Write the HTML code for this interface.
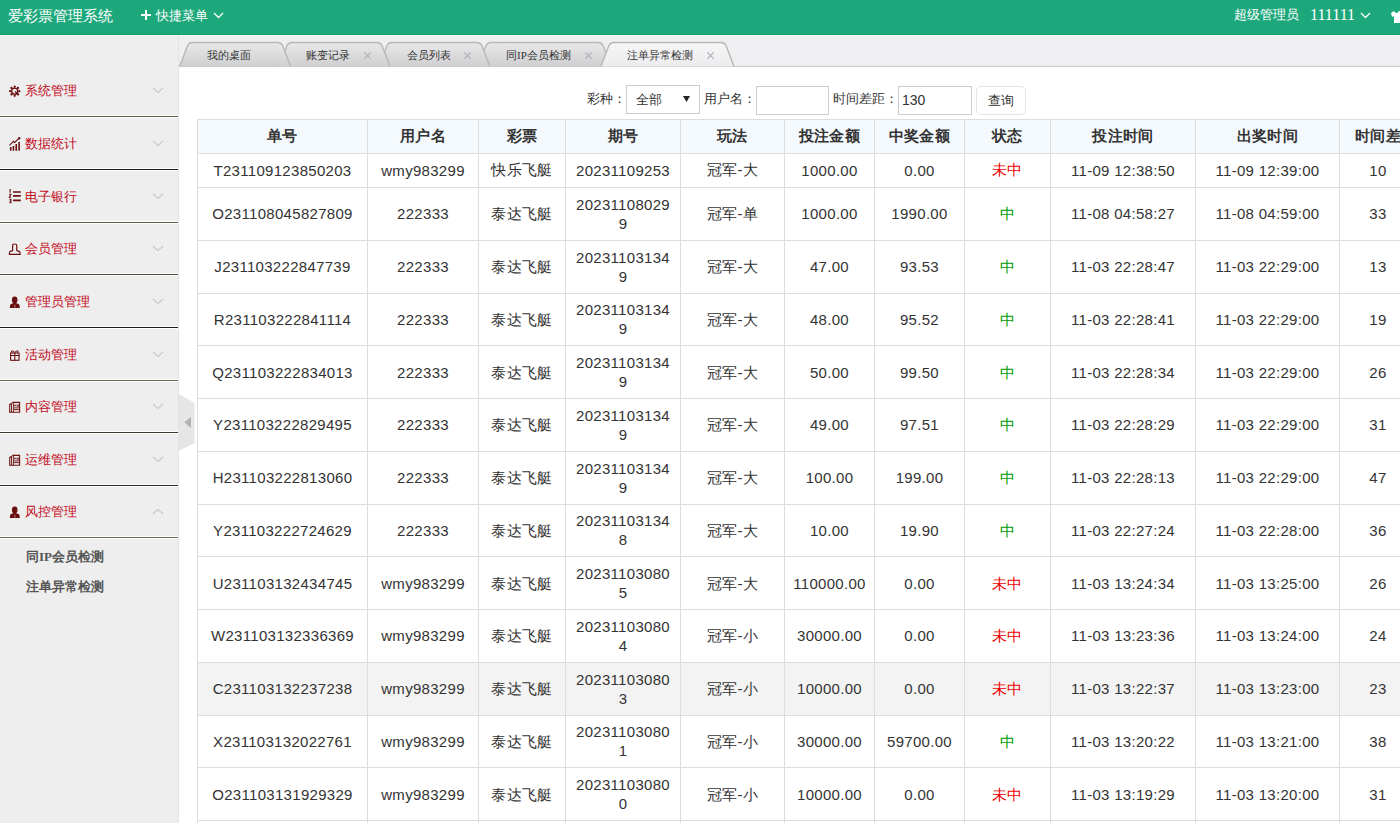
<!DOCTYPE html>
<html><head><meta charset="utf-8">
<style>
*{margin:0;padding:0;box-sizing:border-box}
html,body{width:1400px;height:823px;overflow:hidden;background:#fff;font-family:"Liberation Sans",sans-serif;color:#333}
.a{position:absolute;white-space:nowrap}
.hd{position:absolute;left:0;top:0;width:1400px;height:35px;background:#1da87b;border-bottom:1px solid #00a065;color:#fff}
.hl{position:absolute;left:0;top:35px;width:1400px;height:1px;background:#fbf3f6}
.side{position:absolute;left:0;top:36px;width:179px;height:787px;background:#eee;border-right:1px solid #e3e3e5}
.mt{font-size:13px;line-height:16px;color:#c20a1a}
.sep{position:absolute;left:0;width:178px;height:1px;background:#56564a;box-shadow:0 -1px 0 #fff,0 1px 0 #fff}
.sub{font-size:13px;line-height:16px;color:#555;font-weight:bold}
.tabbar{position:absolute;left:179px;top:36px;width:1221px;height:31px;background:#efeff1}
.tt{font-size:11px;line-height:16px;color:#333}
.cx{font-size:14px;line-height:16px;color:#a9b0b8}
.fl{font-size:13px;line-height:16px;color:#333}
.box{position:absolute;border:1px solid #ccc;background:#fff}
table{position:absolute;left:197px;top:119px;border-collapse:collapse;table-layout:fixed;font-size:15px}
td,th{letter-spacing:0.3px;border:1px solid #ddd;text-align:center;color:#333;font-weight:normal;padding:0;white-space:nowrap}
th{background:#f4f9fd;font-weight:bold;height:34px}
td{height:34px}
tr.w td{height:52.75px;line-height:19px}
tr.hov td{background:#f3f3f3}
.r{color:#e00}
.g{color:#090}
</style></head><body>
<div class="hd">
  <div class="a" style="left:8px;top:4.5px;font-size:15px;line-height:22px">爱彩票管理系统</div>
  <svg class="a" style="left:140px;top:9px" width="12" height="12"><path d="M6 1V11M1 6H11" stroke="#fff" stroke-width="2"/></svg>
  <div class="a" style="left:156px;top:5.5px;font-size:13px;line-height:20px">快捷菜单</div>
  <svg class="a" style="left:213px;top:12px" width="11" height="7"><path d="M1 1L5.5 5.5L10 1" stroke="#fff" stroke-width="1.3" fill="none"/></svg>
  <div class="a" style="left:1234px;top:5px;font-size:13px;line-height:20px">超级管理员</div>
  <div class="a" style="left:1310px;top:5px;font-family:'Liberation Serif',serif;font-size:16px;line-height:20px">111111</div>
  <svg class="a" style="left:1360px;top:12px" width="11" height="7"><path d="M1 1L5.5 5.5L10 1" stroke="#fff" stroke-width="1.3" fill="none"/></svg>
  <svg class="a" style="left:1391px;top:9px" width="11" height="14"><path d="M3 2L0 4L1 8L3 7V14H11V2H8Q7 4 5.5 4Q4 4 3 2Z" fill="#fff"/></svg>
</div>
<div class="hl"></div>
<div class="side">
<div class="a mt" style="left:25px;top:46.7px">系统管理</div>
<div class="sep" style="top:80.0px;background:#585c45"></div>
<svg class="a" style="left:152px;top:51.0px" width="12" height="7"><path d="M1 1L6 5.5L11 1" stroke="#c6c9cf" stroke-width="1.1" fill="none"/></svg>
<svg class="a" style="left:5px;top:43.5px" width="20" height="20"><circle cx="14.30" cy="11.20" r="1.15" fill="#6a0f0f"/><circle cx="12.95" cy="14.45" r="1.15" fill="#6a0f0f"/><circle cx="9.70" cy="15.80" r="1.15" fill="#6a0f0f"/><circle cx="6.45" cy="14.45" r="1.15" fill="#6a0f0f"/><circle cx="5.10" cy="11.20" r="1.15" fill="#6a0f0f"/><circle cx="6.45" cy="7.95" r="1.15" fill="#6a0f0f"/><circle cx="9.70" cy="6.60" r="1.15" fill="#6a0f0f"/><circle cx="12.95" cy="7.95" r="1.15" fill="#6a0f0f"/><circle cx="9.7" cy="11.2" r="3" fill="none" stroke="#6a0f0f" stroke-width="1.3"/><path d="M10 11.5L13.8 14.8" stroke="#6a0f0f" stroke-width="1.4"/></svg>
<div class="a mt" style="left:25px;top:99.7px">数据统计</div>
<div class="sep" style="top:133.0px;background:#1a1a14"></div>
<svg class="a" style="left:152px;top:104.0px" width="12" height="7"><path d="M1 1L6 5.5L11 1" stroke="#c6c9cf" stroke-width="1.1" fill="none"/></svg>
<svg class="a" style="left:5px;top:96.5px" width="20" height="20"><path d="M5.7 13.9V17.7M8.45 13V17.7M11.25 11V17.7M14.1 9V17.7" stroke="#6a0f0f" stroke-width="1.6"/><path d="M4.4 12.4L8.5 8.3L9.7 9.5L13.6 5.6" stroke="#6a0f0f" stroke-width="1.1" fill="none"/><circle cx="14.2" cy="5.2" r="1.2" fill="#6a0f0f"/></svg>
<div class="a mt" style="left:25px;top:152.7px">电子银行</div>
<div class="sep" style="top:186.0px;background:#585c45"></div>
<svg class="a" style="left:152px;top:157.0px" width="12" height="7"><path d="M1 1L6 5.5L11 1" stroke="#c6c9cf" stroke-width="1.1" fill="none"/></svg>
<svg class="a" style="left:5px;top:149.5px" width="20" height="20"><path d="M5.1 3V6.8M4.3 8.4H5.9L4.3 11.2H6M4.3 13.2H5.9V16.7H4.3M4.5 15H5.9" stroke="#6a0f0f" stroke-width="1.1" fill="none"/><path d="M8 6H15.8M8 9.85H15.8M8 14.45H15.8" stroke="#6a0f0f" stroke-width="1.7"/></svg>
<div class="a mt" style="left:25px;top:204.7px">会员管理</div>
<div class="sep" style="top:238.0px;background:#4a4d38"></div>
<svg class="a" style="left:152px;top:209.0px" width="12" height="7"><path d="M1 1L6 5.5L11 1" stroke="#c6c9cf" stroke-width="1.1" fill="none"/></svg>
<svg class="a" style="left:5px;top:201.5px" width="20" height="20"><path d="M7.6 12.5V7.5Q7.6 6 9.7 6Q11.8 6 11.8 7.5V12.5L14.6 13.6Q15.1 14 15.1 16.3H4.4Q4.4 14 4.9 13.6Z" fill="none" stroke="#6a0f0f" stroke-width="1.2"/></svg>
<div class="a mt" style="left:25px;top:257.7px">管理员管理</div>
<div class="sep" style="top:291.0px;background:#1a1a14"></div>
<svg class="a" style="left:152px;top:262.0px" width="12" height="7"><path d="M1 1L6 5.5L11 1" stroke="#c6c9cf" stroke-width="1.1" fill="none"/></svg>
<svg class="a" style="left:5px;top:254.5px" width="20" height="20"><ellipse cx="9.7" cy="8.9" rx="2.8" ry="3.4" fill="#6a0f0f"/><path d="M8.6 12H10.8L14 13.2Q14.8 13.8 14.8 17H4.8Q4.8 13.8 5.6 13.2Z" fill="#6a0f0f"/><path d="M9.9 13.8V16.6" stroke="#d9b7a0" stroke-width="0.7"/></svg>
<div class="a mt" style="left:25px;top:310.7px">活动管理</div>
<div class="sep" style="top:344.0px;background:#646850"></div>
<svg class="a" style="left:152px;top:315.0px" width="12" height="7"><path d="M1 1L6 5.5L11 1" stroke="#c6c9cf" stroke-width="1.1" fill="none"/></svg>
<svg class="a" style="left:5px;top:307.5px" width="20" height="20"><rect x="5.6" y="9" width="8.4" height="7.3" fill="none" stroke="#6a0f0f" stroke-width="1.1"/><path d="M5.1 11.5H14.5M9.8 9V16.3" stroke="#6a0f0f" stroke-width="1.1"/><path d="M9.8 8.6Q8.5 6.2 6.5 7Q6 8 7.5 8.6M9.8 8.6Q11 6.2 13.1 7Q13.6 8 12.1 8.6" fill="none" stroke="#6a0f0f" stroke-width="1"/></svg>
<div class="a mt" style="left:25px;top:362.7px">内容管理</div>
<div class="sep" style="top:396.0px;background:#3a3c2e"></div>
<svg class="a" style="left:152px;top:367.0px" width="12" height="7"><path d="M1 1L6 5.5L11 1" stroke="#c6c9cf" stroke-width="1.1" fill="none"/></svg>
<svg class="a" style="left:5px;top:359.5px" width="20" height="20"><path d="M7.2 6.4H14.6V16.3H4.7V8.4L7.2 7.2" fill="none" stroke="#6a0f0f" stroke-width="1.1"/><path d="M6.5 8V16M8.4 7V16" stroke="#6a0f0f" stroke-width="0.9"/><path d="M9.2 8.7H10.8V10.3H9.2Z" fill="#6a0f0f"/><path d="M11.5 9.1H14M11.5 10.2H14M8.8 11.9H14M8.8 13.6H14" stroke="#6a0f0f" stroke-width="0.9"/></svg>
<div class="a mt" style="left:25px;top:415.7px">运维管理</div>
<div class="sep" style="top:449.0px;background:#2a2a20"></div>
<svg class="a" style="left:152px;top:420.0px" width="12" height="7"><path d="M1 1L6 5.5L11 1" stroke="#c6c9cf" stroke-width="1.1" fill="none"/></svg>
<svg class="a" style="left:5px;top:412.5px" width="20" height="20"><path d="M7.2 6.4H14.6V16.3H4.7V8.4L7.2 7.2" fill="none" stroke="#6a0f0f" stroke-width="1.1"/><path d="M6.5 8V16M8.4 7V16" stroke="#6a0f0f" stroke-width="0.9"/><path d="M9.2 8.7H10.8V10.3H9.2Z" fill="#6a0f0f"/><path d="M11.5 9.1H14M11.5 10.2H14M8.8 11.9H14M8.8 13.6H14" stroke="#6a0f0f" stroke-width="0.9"/></svg>
<div class="a mt" style="left:25px;top:467.7px">风控管理</div>
<div class="sep" style="top:501.0px;background:#6a6e58"></div>
<svg class="a" style="left:152px;top:472.0px" width="12" height="7"><path d="M1 6L6 1.5L11 6" stroke="#c6c9cf" stroke-width="1.1" fill="none"/></svg>
<svg class="a" style="left:5px;top:464.5px" width="20" height="20"><ellipse cx="9.7" cy="8.9" rx="2.8" ry="3.4" fill="#6a0f0f"/><path d="M8.6 12H10.8L14 13.2Q14.8 13.8 14.8 17H4.8Q4.8 13.8 5.6 13.2Z" fill="#6a0f0f"/><path d="M9.9 13.8V16.6" stroke="#d9b7a0" stroke-width="0.7"/></svg>
<div class="a sub" style="left:26px;top:512.5px">同<span style="font-family:&quot;Liberation Serif&quot;,serif">IP</span>会员检测</div>
<div class="a sub" style="left:26px;top:542.5px">注单异常检测</div>
</div>
<div class="tabbar"></div>
<svg class="a" style="left:0;top:0" width="1400" height="70"><defs><linearGradient id="tg" x1="0" y1="0" x2="0" y2="1"><stop offset="0" stop-color="#e9e9e9"/><stop offset="1" stop-color="#cfcfd1"/></linearGradient><linearGradient id="ta" x1="0" y1="0" x2="0" y2="1"><stop offset="0" stop-color="#f6f6f7"/><stop offset="1" stop-color="#ececee"/></linearGradient></defs>
<rect x="179" y="66" width="1221" height="1" fill="#c8c8c8"/>
<path d="M478 66.5L486 45.5Q487.5 42.5 491 42.5L598 42.5Q601.5 42.5 603 45.5L611 66.5" fill="url(#tg)" stroke="#b8b8b8" stroke-width="1.4"/>
<path d="M379 66.5L387 45.5Q388.5 42.5 392 42.5L476.8 42.5Q480.3 42.5 481.8 45.5L489.8 66.5" fill="url(#tg)" stroke="#b8b8b8" stroke-width="1.4"/>
<path d="M279 66.5L287 45.5Q288.5 42.5 292 42.5L377 42.5Q380.5 42.5 382 45.5L390 66.5" fill="url(#tg)" stroke="#b8b8b8" stroke-width="1.4"/>
<path d="M179.6 66.5L187.6 45.5Q189.1 42.5 192.6 42.5L277.6 42.5Q281.1 42.5 282.6 45.5L290.6 66.5" fill="url(#tg)" stroke="#b8b8b8" stroke-width="1.4"/>
<path d="M600.9 66.5L608.9 45.5Q610.4 42.5 613.9 42.5L721 42.5Q724.5 42.5 726 45.5L734 66.5" fill="url(#ta)" stroke="#b8b8b8" stroke-width="1.4"/>
</svg>
<div class="a tt" style="left:206.6px;top:47px">我的桌面</div>
<div class="a tt" style="left:306px;top:47px">账变记录</div>
<svg class="a" style="left:364.3px;top:51.5px" width="8" height="8"><path d="M0.3 0.3L6.8 6.8M6.8 0.3L0.3 6.8" stroke="#abb3bb" stroke-width="1.15"/></svg>
<div class="a tt" style="left:406.5px;top:47px">会员列表</div>
<svg class="a" style="left:464.3px;top:51.5px" width="8" height="8"><path d="M0.3 0.3L6.8 6.8M6.8 0.3L0.3 6.8" stroke="#abb3bb" stroke-width="1.15"/></svg>
<div class="a tt" style="left:506px;top:47px">同<span style="font-family:&quot;Liberation Serif&quot;,serif">IP</span>会员检测</div>
<svg class="a" style="left:585.3px;top:51.5px" width="8" height="8"><path d="M0.3 0.3L6.8 6.8M6.8 0.3L0.3 6.8" stroke="#abb3bb" stroke-width="1.15"/></svg>
<div class="a tt" style="left:627px;top:47px">注单异常检测</div>
<svg class="a" style="left:707.3px;top:51.5px" width="8" height="8"><path d="M0.3 0.3L6.8 6.8M6.8 0.3L0.3 6.8" stroke="#abb3bb" stroke-width="1.15"/></svg>
<div class="a fl" style="left:587px;top:91px">彩种：</div>
<div class="box" style="left:626px;top:85px;width:74px;height:29px"></div>
<div class="a fl" style="left:636px;top:92px">全部</div>
<svg class="a" style="left:683px;top:96px" width="7" height="6"><path d="M0 0H7L3.5 6Z" fill="#222"/></svg>
<div class="a fl" style="left:704px;top:91px">用户名：</div>
<div class="box" style="left:756px;top:86px;width:73px;height:29px"></div>
<div class="a fl" style="left:833px;top:91px">时间差距：</div>
<div class="box" style="left:898px;top:86px;width:74px;height:29px"></div>
<div class="a fl" style="left:902px;top:92px;font-size:14px">130</div>
<div class="box" style="left:975.5px;top:86px;width:50px;height:29px;border-radius:5px;border:1.5px solid #e4e4e4"></div>
<div class="a fl" style="left:988px;top:93px">查询</div>
<svg class="a" style="left:179px;top:390px" width="20" height="66"><path d="M0 4.3L15.6 12.8V52.9L0 60.8Z" fill="#e6e6e6"/><path d="M5.3 32.2L12 26.8V38.3Z" fill="#b4b4b4"/></svg>
<table style="width:1219px"><colgroup><col style="width:170px"><col style="width:111px"><col style="width:87px"><col style="width:115px"><col style="width:104px"><col style="width:90px"><col style="width:90px"><col style="width:86px"><col style="width:145px"><col style="width:144px"><col style="width:77px"></colgroup><tr><th>单号</th><th>用户名</th><th>彩票</th><th>期号</th><th>玩法</th><th>投注金额</th><th>中奖金额</th><th>状态</th><th>投注时间</th><th>出奖时间</th><th>时间差</th></tr><tr class=""><td>T231109123850203</td><td>wmy983299</td><td>快乐飞艇</td><td>20231109253</td><td>冠军-大</td><td>1000.00</td><td>0.00</td><td><span class="r">未中</span></td><td>11-09 12:38:50</td><td>11-09 12:39:00</td><td>10</td></tr><tr class="w"><td>O231108045827809</td><td>222333</td><td>泰达飞艇</td><td>20231108029<br>9</td><td>冠军-单</td><td>1000.00</td><td>1990.00</td><td><span class="g">中</span></td><td>11-08 04:58:27</td><td>11-08 04:59:00</td><td>33</td></tr><tr class="w"><td>J231103222847739</td><td>222333</td><td>泰达飞艇</td><td>20231103134<br>9</td><td>冠军-大</td><td>47.00</td><td>93.53</td><td><span class="g">中</span></td><td>11-03 22:28:47</td><td>11-03 22:29:00</td><td>13</td></tr><tr class="w"><td>R231103222841114</td><td>222333</td><td>泰达飞艇</td><td>20231103134<br>9</td><td>冠军-大</td><td>48.00</td><td>95.52</td><td><span class="g">中</span></td><td>11-03 22:28:41</td><td>11-03 22:29:00</td><td>19</td></tr><tr class="w"><td>Q231103222834013</td><td>222333</td><td>泰达飞艇</td><td>20231103134<br>9</td><td>冠军-大</td><td>50.00</td><td>99.50</td><td><span class="g">中</span></td><td>11-03 22:28:34</td><td>11-03 22:29:00</td><td>26</td></tr><tr class="w"><td>Y231103222829495</td><td>222333</td><td>泰达飞艇</td><td>20231103134<br>9</td><td>冠军-大</td><td>49.00</td><td>97.51</td><td><span class="g">中</span></td><td>11-03 22:28:29</td><td>11-03 22:29:00</td><td>31</td></tr><tr class="w"><td>H231103222813060</td><td>222333</td><td>泰达飞艇</td><td>20231103134<br>9</td><td>冠军-大</td><td>100.00</td><td>199.00</td><td><span class="g">中</span></td><td>11-03 22:28:13</td><td>11-03 22:29:00</td><td>47</td></tr><tr class="w"><td>Y231103222724629</td><td>222333</td><td>泰达飞艇</td><td>20231103134<br>8</td><td>冠军-大</td><td>10.00</td><td>19.90</td><td><span class="g">中</span></td><td>11-03 22:27:24</td><td>11-03 22:28:00</td><td>36</td></tr><tr class="w"><td>U231103132434745</td><td>wmy983299</td><td>泰达飞艇</td><td>20231103080<br>5</td><td>冠军-大</td><td>110000.00</td><td>0.00</td><td><span class="r">未中</span></td><td>11-03 13:24:34</td><td>11-03 13:25:00</td><td>26</td></tr><tr class="w"><td>W231103132336369</td><td>wmy983299</td><td>泰达飞艇</td><td>20231103080<br>4</td><td>冠军-小</td><td>30000.00</td><td>0.00</td><td><span class="r">未中</span></td><td>11-03 13:23:36</td><td>11-03 13:24:00</td><td>24</td></tr><tr class="w hov"><td>C231103132237238</td><td>wmy983299</td><td>泰达飞艇</td><td>20231103080<br>3</td><td>冠军-小</td><td>10000.00</td><td>0.00</td><td><span class="r">未中</span></td><td>11-03 13:22:37</td><td>11-03 13:23:00</td><td>23</td></tr><tr class="w"><td>X231103132022761</td><td>wmy983299</td><td>泰达飞艇</td><td>20231103080<br>1</td><td>冠军-小</td><td>30000.00</td><td>59700.00</td><td><span class="g">中</span></td><td>11-03 13:20:22</td><td>11-03 13:21:00</td><td>38</td></tr><tr class="w"><td>O231103131929329</td><td>wmy983299</td><td>泰达飞艇</td><td>20231103080<br>0</td><td>冠军-小</td><td>10000.00</td><td>0.00</td><td><span class="r">未中</span></td><td>11-03 13:19:29</td><td>11-03 13:20:00</td><td>31</td></tr><tr class="w"><td></td><td></td><td></td><td></td><td></td><td></td><td></td><td><span class="g"></span></td><td></td><td></td><td></td></tr></table>
</body></html>
